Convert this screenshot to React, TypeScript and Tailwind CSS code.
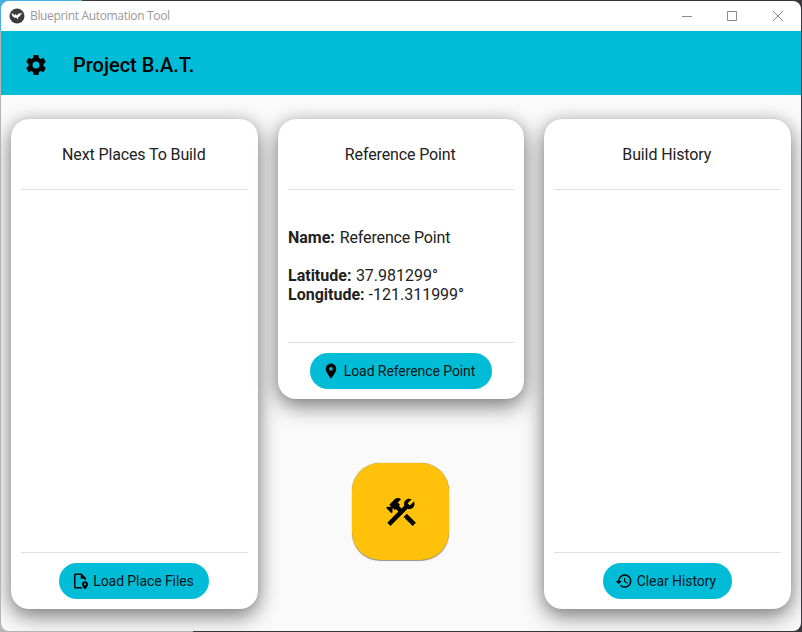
import type { ReactNode } from "react";

const COG =
  "M12,15.5A3.5,3.5 0 0,1 8.5,12A3.5,3.5 0 0,1 12,8.5A3.5,3.5 0 0,1 15.5,12A3.5,3.5 0 0,1 12,15.5M19.43,12.97C19.47,12.65 19.5,12.33 19.5,12C19.5,11.67 19.47,11.34 19.43,11L21.54,9.37C21.73,9.22 21.78,8.95 21.66,8.73L19.66,5.27C19.54,5.05 19.27,4.96 19.05,5.05L16.56,6.05C16.04,5.66 15.5,5.32 14.87,5.07L14.5,2.42C14.46,2.18 14.25,2 14,2H10C9.75,2 9.54,2.18 9.5,2.42L9.13,5.07C8.5,5.32 7.96,5.66 7.44,6.05L4.95,5.05C4.73,4.96 4.46,5.05 4.34,5.27L2.34,8.73C2.21,8.95 2.27,9.22 2.46,9.37L4.57,11C4.53,11.34 4.5,11.67 4.5,12C4.5,12.33 4.53,12.65 4.57,12.97L2.46,14.63C2.27,14.78 2.21,15.05 2.34,15.27L4.34,18.73C4.46,18.95 4.73,19.03 4.95,18.95L7.44,17.94C7.96,18.34 8.5,18.68 9.13,18.93L9.5,21.58C9.54,21.82 9.75,22 10,22H14C14.25,22 14.46,21.82 14.5,21.58L14.87,18.93C15.5,18.67 16.04,18.34 16.56,17.94L19.05,18.95C19.27,19.03 19.54,18.95 19.66,18.73L21.66,15.27C21.78,15.05 21.73,14.78 21.54,14.63L19.43,12.97Z";
const HAMMER_WRENCH =
  "M13.78 15.3L19.78 21.3L21.89 19.14L15.89 13.14L13.78 15.3M17.5 10.1C17.11 10.1 16.69 10.05 16.36 9.91L4.97 21.25L2.86 19.14L10.27 11.74L8.5 9.96L7.78 10.66L6.33 9.25V12.11L5.63 12.81L2.11 9.25L2.81 8.55H5.62L4.22 7.14L7.78 3.58C8.95 2.41 10.83 2.41 12 3.58L9.89 5.74L11.3 7.14L10.59 7.85L12.38 9.63L14.2 7.75C14.06 7.42 14 7 14 6.63C14 4.66 15.56 3.11 17.5 3.11C18.09 3.11 18.61 3.25 19.08 3.53L16.41 6.2L17.91 7.7L20.58 5.03C20.86 5.5 21 6 21 6.63C21 8.55 19.45 10.1 17.5 10.1Z";
const MAP_MARKER =
  "M12,11.5A2.5,2.5 0 0,1 9.5,9A2.5,2.5 0 0,1 12,6.5A2.5,2.5 0 0,1 14.5,9A2.5,2.5 0 0,1 12,11.5M12,2A7,7 0 0,0 5,9C5,14.25 12,22 12,22C12,22 19,14.25 19,9A7,7 0 0,0 12,2Z";
const HISTORY =
  "M13.5,8H12V13L16.28,15.54L17,14.33L13.5,12.25V8M13,3A9,9 0 0,0 4,12H1L4.96,16.03L9,12H6A7,7 0 0,1 13,5A7,7 0 0,1 20,12A7,7 0 0,1 13,19C11.07,19 9.32,18.21 8.06,16.94L6.64,18.36C8.27,20 10.5,21 13,21A9,9 0 0,0 22,12A9,9 0 0,0 13,3";
const FILE_MARKER =
  "M6 2C4.9 2 4 2.9 4 4V20C4 21.1 4.9 22 6 22H15.2C14.7 21.4 14.2 20.7 13.8 20H6V4H13V9H18V10.6C18.6 10.5 19.4 10.5 20 10.7V8L14 2H6M18.7 12.3C16.5 12.3 14.7 14 14.7 16.2C14.7 19.3 18.7 23 18.7 23C18.7 23 22.7 19.3 22.7 16.2C22.7 14 20.9 12.3 18.7 12.3M18.7 17.7C17.9 17.7 17.3 17.1 17.3 16.3C17.3 15.5 17.9 14.9 18.7 14.9C19.5 14.9 20.1 15.5 20.1 16.3C20.1 17.1 19.5 17.7 18.7 17.7Z";

function Icon({ d, className }: { d: string; className: string }) {
  return (
    <svg viewBox="0 0 24 24" className={className} fill="currentColor">
      <path d={d} />
    </svg>
  );
}

function Pill({ icon, label, className }: { icon: string; label: string; className: string }) {
  return (
    <button
      className={`flex h-9 shrink-0 items-center self-center rounded-full bg-[#00bcd7] text-sm tracking-[-0.08px] whitespace-nowrap text-black/90 ${className}`}
    >
      <Icon d={icon} className="mr-1 size-[18px] shrink-0 text-black" />
      <span>{label}</span>
    </button>
  );
}

function Card({
  title,
  className,
  action,
  children,
}: {
  title: string;
  className: string;
  action: ReactNode;
  children?: ReactNode;
}) {
  return (
    <section
      className={`flex flex-col rounded-[18px] bg-white px-[10px] pb-[10px] shadow-[0_8px_22px_rgba(0,0,0,0.42),0_2px_16px_rgba(0,0,0,0.18),0_0_1px_rgba(0,0,0,0.2)] ${className}`}
    >
      <h2 className="box-content flex h-[69px] shrink-0 items-center justify-center border-b border-[#dfdfdf] pt-px pr-px text-base font-normal tracking-[-0.12px] text-[#212121]">
        {title}
      </h2>
      <div className="flex-1">{children}</div>
      <div className="mb-[10px] h-px bg-[#dfdfdf]" />
      {action}
    </section>
  );
}

export default function App() {
  return (
    <div className="flex h-[632px] w-[802px] flex-col overflow-hidden bg-[linear-gradient(90deg,#b4b4b4_0,#b4b4b4_193px,#38353a_193px)] font-['Roboto',sans-serif]">
      <div className="h-[31px] shrink-0 bg-[linear-gradient(90deg,#49aee0_0,#49aee0_82px,#38353a_82px)] px-px pt-px">
        <div className="flex h-[30px] items-center rounded-t-[8px] bg-white pl-2">
          <svg viewBox="0 0 16 16" className="size-4">
            <circle cx="8" cy="8" r="7.5" fill="#3c3c3f" />
            <path d="M2.3 5.2L4.6 6L5.4 7.6L6.6 6L7.8 7.4L9.6 5.6L13.8 5.2L11.8 6.6L11 8.2L9.4 9L8.6 11.5L7.4 9.4L5.4 9.8L3.6 8.2Z" fill="#fff" />
          </svg>
          <span className="ml-[5px] font-['Open_Sans',sans-serif] text-[12px] tracking-[-0.34px] text-[#999]">
            Blueprint Automation Tool
          </span>
          <svg viewBox="0 0 102 12" className="mr-[17px] ml-auto h-3 w-[102px]" fill="none" stroke="#8b8b8b">
            <path d="M0 6.5H10M45.5 1.5H54.5V10.5H45.5ZM91 1L101 11M101 1L91 11" />
          </svg>
        </div>
      </div>
      <div className="mx-px mb-px flex flex-1 flex-col overflow-hidden rounded-b-[8px] bg-[#fafafa]">
        <header className="flex h-16 shrink-0 items-center bg-[#00bcd7] pt-1 pl-[23px] text-black">
          <Icon d={COG} className="size-6" />
          <h1 className="ml-[25px] text-xl font-medium">Project B.A.T.</h1>
        </header>
        <main className="flex flex-1 items-start gap-5 px-[10px] pt-6">
          <Card
            title="Next Places To Build"
            className="h-[490px] w-[246.5px]"
            action={<Pill icon={FILE_MARKER} label="Load Place Files" className="w-[150px] pl-3" />}
          />
          <div className="flex w-[246.5px] flex-col items-center">
            <Card
              title="Reference Point"
              className="h-[280px] w-[246.5px]"
              action={<Pill icon={MAP_MARKER} label="Load Reference Point" className="w-[182px] pl-3" />}
            >
              <div className="pt-[38px] pl-[0.5px] text-base leading-[19px] text-[#212121]">
                <p>
                  <b>Name:</b> <span className="ml-px tracking-[-0.15px]">Reference Point</span>
                </p>
                <p className="mt-[19px]"><b>Latitude:</b> <span className="ml-[0.5px]">37.981299°</span></p>
                <p><b>Longitude:</b> -121.311999°</p>
              </div>
            </Card>
            <button className="mt-16 flex size-[97px] items-center justify-center rounded-[28px] bg-[#ffc10a] text-black shadow-[0_0.5px_1px_rgba(0,0,0,0.4),0_0_1px_rgba(0,0,0,0.25)]">
              <Icon d={HAMMER_WRENCH} className="size-9" />
            </button>
          </div>
          <Card
            title="Build History"
            className="h-[490px] w-[246.5px]"
            action={<Pill icon={HISTORY} label="Clear History" className="w-[129px] pl-3" />}
          />
        </main>
      </div>
    </div>
  );
}
